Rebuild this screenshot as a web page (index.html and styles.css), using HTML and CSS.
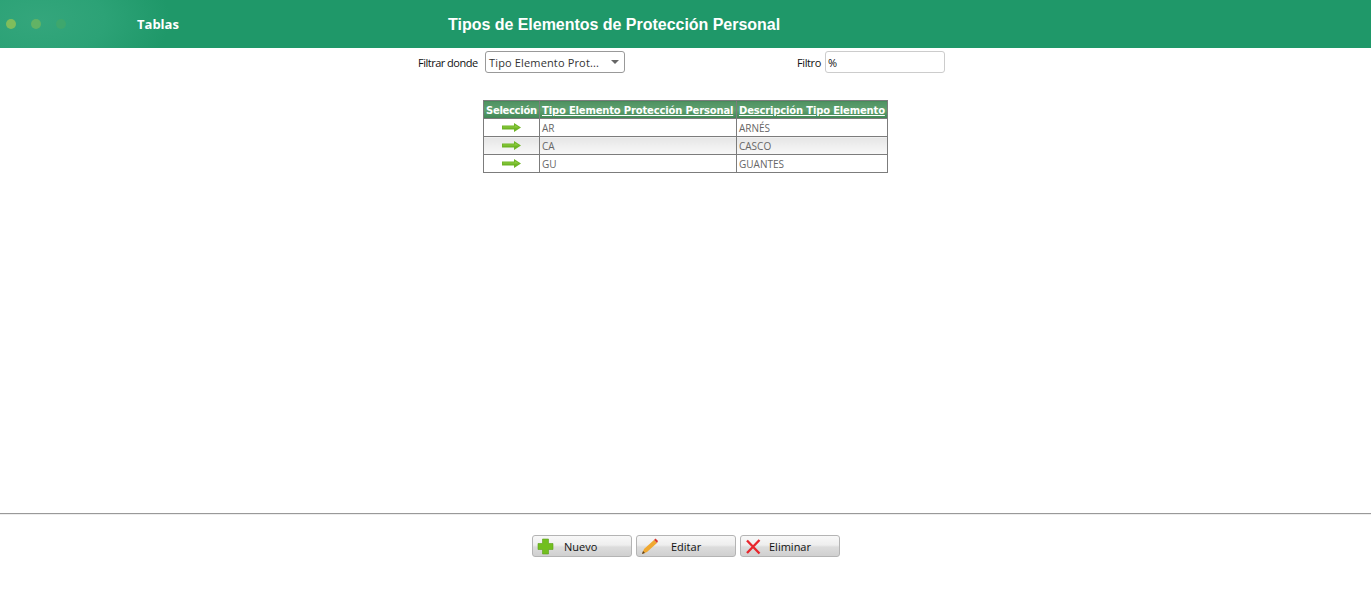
FILE: index.html
```html
<!DOCTYPE html>
<html lang="es">
<head>
<meta charset="utf-8">
<title>Tipos de Elementos de Protección Personal</title>
<link rel="stylesheet" href="styles.css">
</head>
<body>
<header class="topbar">
  <div class="dots"><span class="dot d1"></span><span class="dot d2"></span><span class="dot d3"></span></div>
  <div class="section">Tablas</div>
  <h1 class="title">Tipos de Elementos de Protección Personal</h1>
</header>
<div class="filters">
  <label class="lbl lbl-where">Filtrar donde</label>
  <div class="select"><span>Tipo Elemento Prot...</span><i class="caret"></i></div>
  <label class="lbl lbl-filter">Filtro</label>
  <div class="input">%</div>
</div>
<main class="content">
  <table class="grid">
    <thead>
      <tr><th class="c1">Selección</th><th class="c2"><a>Tipo Elemento Protección Personal</a></th><th class="c3"><a>Descripción Tipo Elemento</a></th></tr>
    </thead>
    <tbody>
      <tr><td class="sel"><svg class="arrow" viewBox="0 0 19 9" width="19" height="9"><path d="M0 2.500h12V0l7 4.500L12 9V6.500H0z" fill="#6fb526"/><path d="M1 3.500h12V2l4 2.500H1z" fill="#8ccb3e"/></svg></td><td>AR</td><td>ARNÉS</td></tr>
      <tr class="alt"><td class="sel"><svg class="arrow" viewBox="0 0 19 9" width="19" height="9"><path d="M0 2.500h12V0l7 4.500L12 9V6.500H0z" fill="#6fb526"/><path d="M1 3.500h12V2l4 2.500H1z" fill="#8ccb3e"/></svg></td><td>CA</td><td>CASCO</td></tr>
      <tr><td class="sel"><svg class="arrow" viewBox="0 0 19 9" width="19" height="9"><path d="M0 2.500h12V0l7 4.500L12 9V6.500H0z" fill="#6fb526"/><path d="M1 3.500h12V2l4 2.500H1z" fill="#8ccb3e"/></svg></td><td>GU</td><td>GUANTES</td></tr>
    </tbody>
  </table>
</main>
<footer class="actions">
  <button class="btn"><svg class="ico" viewBox="0 0 17 17" width="17" height="17"><path d="M5.500 1h6v4.500H16v6h-4.500V16h-6v-4.500H1v-6h4.500z" fill="#72bf1f" stroke="#5b9f18" stroke-width=".6"/></svg><span class="t-nuevo">Nuevo</span></button>
  <button class="btn"><svg class="ico" viewBox="0 0 17 17" width="17" height="17"><path d="M1 16l2-5L13 2l3 3L6 14z" fill="#f0a830"/><path d="M1 16l1-3 2 2z" fill="#5a4020"/><path d="M13 2l1.500-1.500 2.500 2.500L16 5z" fill="#d8382c"/></svg><span class="t-editar">Editar</span></button>
  <button class="btn"><svg class="ico" viewBox="0 0 17 17" width="17" height="17"><path d="M2 2.500L14.500 15.500M14.500 2L2 15" stroke="#e8262c" stroke-width="2.400" fill="none"/></svg><span class="t-eliminar">Eliminar</span></button>
</footer>
</body>
</html>
```
FILE: styles.css
```css
html, body { margin: 0; padding: 0; background: #fff; }
body { width: 1371px; height: 594px; overflow: hidden; font-family: "Open Sans", "Liberation Sans", sans-serif; font-size: 11px; color: #000; display: flex; flex-direction: column; }

.topbar { height: 48px; flex: none; display: flex; align-items: center; background: radial-gradient(ellipse 130px 70px at 40px 20px, #34a67c 0%, #2ca276 50%, #1f9869 100%) #1e9768; color: #fff; }
.dots { display: flex; gap: 15px; padding-left: 6px; width: 131px; box-sizing: border-box; }
.dot { width: 10px; height: 10px; border-radius: 50%; }
.d1 { background: #7fbd5c; }
.d2 { background: #62b365; }
.d3 { background: #3ea76d; }
.section { width: 311px; font-family: "Open Sans", sans-serif; font-weight: 700; font-size: 13px; padding-left: 6px; box-sizing: border-box; }
.title { margin: 2px 0 0; font-family: "Liberation Sans", Arial, sans-serif; font-weight: 700; font-size: 16px; letter-spacing: -.025px; padding-left: 6px; }

.filters { display: flex; align-items: center; height: 22px; margin-top: 3px; flex: none; }
.lbl { font-size: 11px; font-family: "Open Sans", sans-serif; color: #111; }
.lbl-where { margin-left: 418px; width: 67px; letter-spacing: -.5px; }
.lbl-filter { margin-left: 172px; width: 28px; letter-spacing: -.4px; }
.select, .input { box-sizing: border-box; height: 22px; border-radius: 3px; font-family: "Open Sans", sans-serif; font-size: 11px; color: #333; display: flex; align-items: center; padding-left: 3px; }
.select { width: 140px; border: 1px solid #999; position: relative; letter-spacing: .15px; }
.caret { position: absolute; right: 5px; top: 8px; width: 0; height: 0; border-left: 4px solid transparent; border-right: 4px solid transparent; border-top: 4px solid #666; }
.input { width: 120px; border: 1px solid #ccc; padding-left: 2px; color: #111; }

.content { flex: none; height: 441px; box-sizing: border-box; border-bottom: 1px solid #999; padding: 27px 0 0 483px; }
.grid { border-collapse: collapse; table-layout: fixed; width: 404px; border: 1px solid #7c7c7c; font-family: "Open Sans", sans-serif; font-size: 10px; }
.grid th { height: 16px; padding: 1px 2px 0; background: linear-gradient(#4f9261, #5fa06f 50%, #3f8554); color: #fff; font-family: "DejaVu Sans", sans-serif; font-size: 10px; font-weight: 700; letter-spacing: -.17px; text-align: left; border: 1px solid #7c7c7c; white-space: nowrap; overflow: hidden; }
.grid th.c1 { letter-spacing: -.3px; }
.grid th a { text-decoration: underline; }
.c1 { width: 51px; }
.c2 { width: 192px; }
.c3 { width: 146px; }
.grid td { height: 17px; padding: 0 2px; color: #666; border: 1px solid #7c7c7c; line-height: 1; }
.alt td { background: linear-gradient(#e6e6e6, #f8f8f8); }
.grid td.sel { text-align: center; padding: 0; }
.arrow { display: block; margin: 0 auto; }

.actions { display: flex; gap: 4px; padding: 20px 0 0 532px; border-top: 1px solid #eee; }
.btn { box-sizing: border-box; width: 100px; height: 22px; padding: 0 0 0 4px; display: flex; align-items: center; border: 1px solid #b4b4b4; border-radius: 3px; background: linear-gradient(#f8f8f8, #eeeeee 45%, #dcdcdc 55%, #d0d0d0); font-family: "Open Sans", sans-serif; font-size: 11px; color: #111; }
.ico { flex: none; }
.t-nuevo { margin-left: 10px; }
.t-editar { margin-left: 13px; }
.t-eliminar { margin-left: 7px; }
```
